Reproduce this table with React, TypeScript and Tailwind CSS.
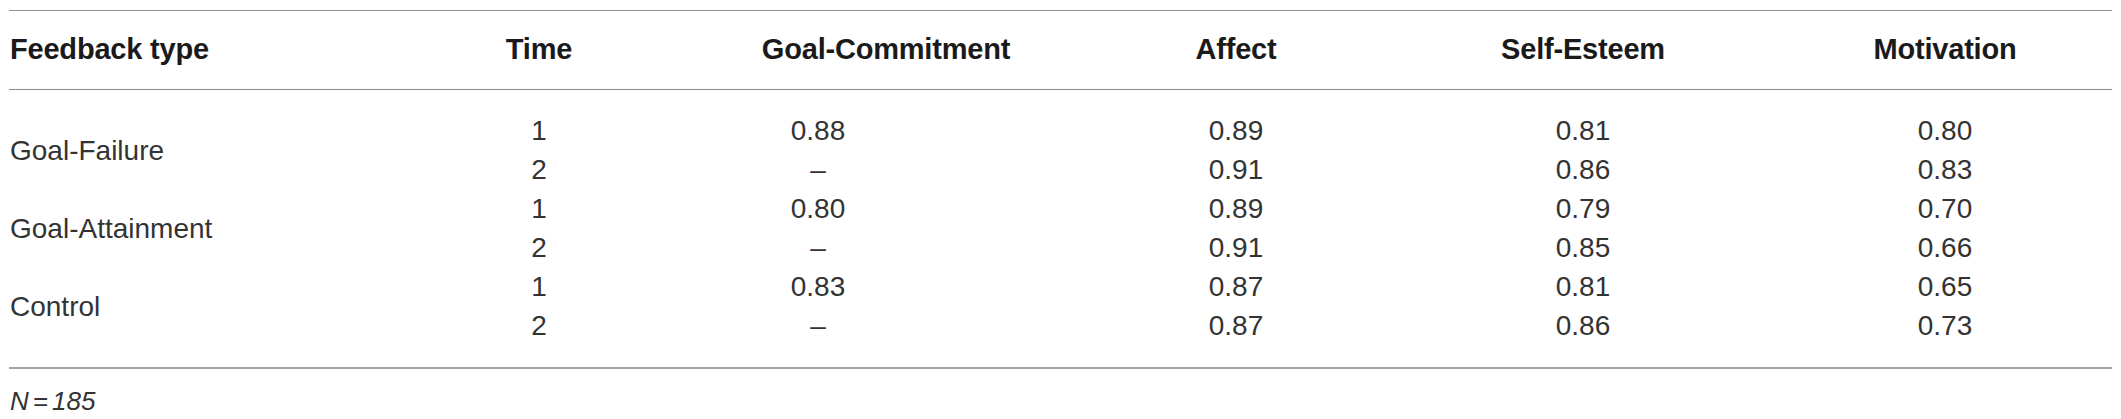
import React from "react";

const groups = [
  { label: "Goal-Failure", rows: [["1", "0.88", "0.89", "0.81", "0.80"], ["2", "–", "0.91", "0.86", "0.83"]] },
  { label: "Goal-Attainment", rows: [["1", "0.80", "0.89", "0.79", "0.70"], ["2", "–", "0.91", "0.85", "0.66"]] },
  { label: "Control", rows: [["1", "0.83", "0.87", "0.81", "0.65"], ["2", "–", "0.87", "0.86", "0.73"]] },
];

export default function App() {
  return (
    <div className="w-[2121px] h-[419px] bg-white pt-[10px] pl-[9px] font-['Liberation_Sans',Arial,sans-serif]">
      <div className="w-[2103px]">
        <div className="border-t border-[#8f8f8f]">
          <div className="grid grid-cols-[431px_198px_496px_204px_490px_234px] h-[79px] items-center border-b border-[#8a8a8a] font-bold text-[29px] text-[#1a1a1a] tracking-[-0.2px]">
            <div className="pl-[1px]">Feedback type</div>
            <div className="text-center">Time</div>
            <div className="text-center">Goal-Commitment</div>
            <div className="text-center">Affect</div>
            <div className="text-center">Self-Esteem</div>
            <div className="text-center">Motivation</div>
          </div>
          <div className="pt-[21px] pb-[22px] border-b-2 border-[#a3a3a3] text-[28px] leading-[39px] text-[#333333]">
            {groups.map((g) => (
              <div key={g.label} className="grid grid-cols-[431px_198px_496px_204px_490px_234px]">
                <div className="pl-[1px] flex items-center">{g.label}</div>
                <div className="flex flex-col items-center">
                  {g.rows.map((r, i) => (
                    <div key={i}>{r[0]}</div>
                  ))}
                </div>
                <div className="flex flex-col items-center pr-[136px]">
                  {g.rows.map((r, i) => (
                    <div key={i}>{r[1]}</div>
                  ))}
                </div>
                <div className="flex flex-col items-center">
                  {g.rows.map((r, i) => (
                    <div key={i}>{r[2]}</div>
                  ))}
                </div>
                <div className="flex flex-col items-center">
                  {g.rows.map((r, i) => (
                    <div key={i}>{r[3]}</div>
                  ))}
                </div>
                <div className="flex flex-col items-center">
                  {g.rows.map((r, i) => (
                    <div key={i}>{r[4]}</div>
                  ))}
                </div>
              </div>
            ))}
          </div>
        </div>
        <div className="mt-[17px] pl-[1px] italic text-[26px] leading-[30px] text-[#333333]">
          N<span className="mx-[4px]">=</span>185
        </div>
      </div>
    </div>
  );
}
